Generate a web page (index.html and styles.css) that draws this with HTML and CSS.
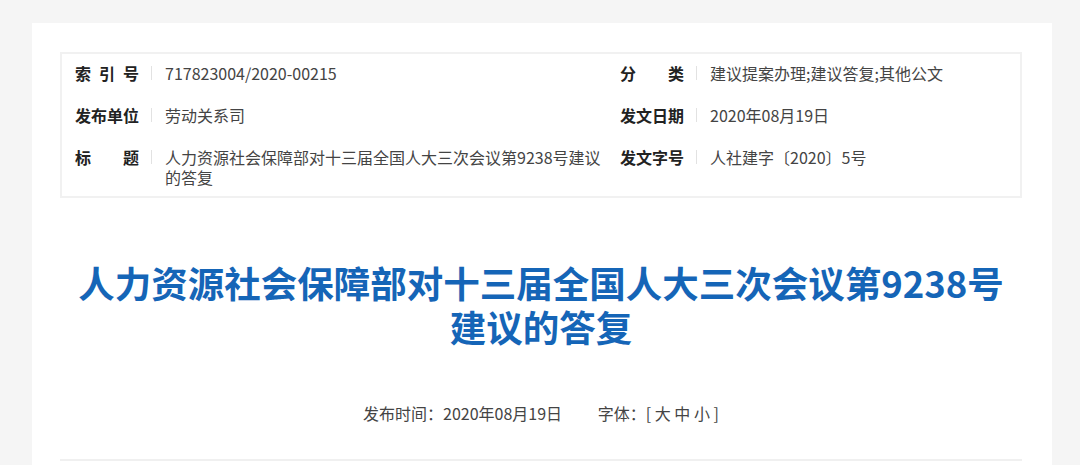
FILE: index.html
```
<!DOCTYPE html>
<html lang="zh-CN">
<head>
    <meta charset="UTF-8">
    <meta name="viewport" content="width=device-width, initial-scale=1.0">
    <title>人力资源社会保障部对十三届全国人大三次会议第9238号建议的答复</title>
    <link rel="stylesheet" href="styles.css">
</head>
<body>
    <div class="page">
        <div class="info">
            <div class="row">
                <div class="cell">
                    <span class="label">索 引 号</span><span class="sep"></span>
                    <span class="value">717823004/2020-00215</span>
                </div>
                <div class="cell">
                    <span class="label">分 类</span><span class="sep"></span>
                    <span class="value">建议提案办理;建议答复;其他公文</span>
                </div>
            </div>
            <div class="row">
                <div class="cell">
                    <span class="label">发布单位</span><span class="sep"></span>
                    <span class="value">劳动关系司</span>
                </div>
                <div class="cell">
                    <span class="label">发文日期</span><span class="sep"></span>
                    <span class="value">2020年08月19日</span>
                </div>
            </div>
            <div class="row">
                <div class="cell">
                    <span class="label">标 题</span><span class="sep"></span>
                    <span class="value">人力资源社会保障部对十三届全国人大三次会议第9238号建议的答复</span>
                </div>
                <div class="cell">
                    <span class="label">发文字号</span><span class="sep"></span>
                    <span class="value">人社建字〔2020〕5号</span>
                </div>
            </div>
        </div>

        <h1 class="title">人力资源社会保障部对十三届全国人大三次会议第9238号<br>建议的答复</h1>

        <div class="meta">
            <span>发布时间：2020年08月19日</span>
            <span class="font-size">字体：[ <a href="#">大</a> <a href="#">中</a> <a href="#">小</a> ]</span>
        </div>
        <div class="divider"></div>
    </div>
</body>
</html>
```

FILE: styles.css
```
body {
    margin: 0;
    background-color: #f5f5f5;
    font-family: "Noto Sans CJK SC", "Noto Sans", sans-serif;
    color: #333;
}

.page {
    width: 962px;
    margin: 23px 0 0 32px;
    padding: 29px 30px 0 28px;
    background-color: #fff;
    min-height: 420px;
}

.info {
    border: 2px solid #f1f1f1;
    padding: 9px 0;
}

.row {
    display: flex;
    font-size: 16px;
    line-height: 20px;
}

.row + .row {
    margin-top: 22px;
}

.cell {
    display: flex;
    align-items: flex-start;
}

.cell:first-child {
    width: 545px;
    padding-left: 13px;
}

.cell:first-child .value {
    width: 438px;
    padding-right: 16px;
}

.label {
    width: 64px;
    font-weight: bold;
    color: #222;
    text-align: justify;
    text-align-last: justify;
}

.sep {
    width: 1px;
    height: 14px;
    margin: 3px 13px 0 12px;
    background-color: #e2e2e2;
}

.value {
    color: #444;
}

.title {
    margin: 63px 0 0;
    font-size: 36.5px;
    line-height: 44px;
    font-weight: bold;
    color: #1565b7;
    text-align: center;
    white-space: nowrap;
}

.meta {
    margin-top: 54px;
    font-size: 16px;
    line-height: 20px;
    color: #444;
    text-align: center;
}

.font-size {
    margin-left: 32px;
}

.font-size a {
    color: #444;
    text-decoration: none;
}

.divider {
    height: 2px;
    margin-top: 36px;
    background-color: #f0f0f0;
}
```
